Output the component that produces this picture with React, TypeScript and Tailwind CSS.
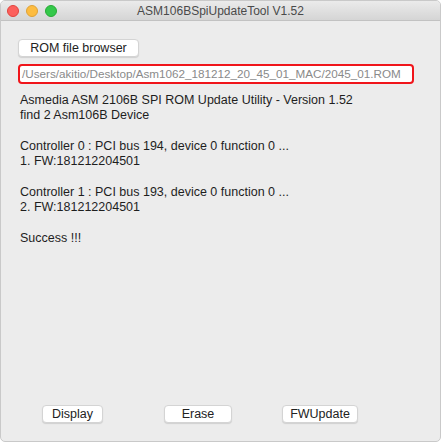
export default function App() {
  const lines = [
    "Asmedia ASM 2106B SPI ROM Update Utility - Version 1.52",
    "find 2 Asm106B Device",
    "",
    "Controller 0 : PCI bus 194, device 0 function 0 ...",
    "1. FW:181212204501",
    "",
    "Controller 1 : PCI bus 193, device 0 function 0 ...",
    "2. FW:181212204501",
    "",
    "Success !!!",
  ];

  const btn =
    "h-[18px] bg-white rounded-[4px] border border-[#d4d4d4] shadow-[0_1px_1px_rgba(0,0,0,0.12)] text-[12.5px] text-[#222] leading-none flex items-center justify-center";

  return (
    <div
      className="w-[442px] h-[442px] bg-white"
      style={{ fontFamily: "'Liberation Sans', Arial, sans-serif" }}
    >
      <div className="w-[441px] h-[442px] flex flex-col bg-[#ececec] border border-[#c9c9c9] rounded-b-[5px] rounded-t-[5px] overflow-hidden">
        {/* Title bar */}
        <div className="relative h-[20px] flex items-center bg-gradient-to-b from-[#ebebeb] to-[#d5d5d5] border-b border-[#c2c2c2]">
          <div className="flex items-center gap-[7px] pl-[6px]">
            <span className="w-[12px] h-[12px] rounded-full bg-[#fc605c] border border-[#e0443e]" />
            <span className="w-[12px] h-[12px] rounded-full bg-[#fdbc40] border border-[#dea236]" />
            <span className="w-[12px] h-[12px] rounded-full bg-[#34c84a] border border-[#27aa35]" />
          </div>
          <div className="absolute inset-0 flex items-center justify-center text-[12px] text-[#4a4a4a]">
            ASM106BSpiUpdateTool V1.52
          </div>
        </div>

        {/* Body */}
        <div className="flex-1 flex flex-col px-[17px]">
          <div className="mt-[18px] w-[121px]">
            <div className={btn}>ROM file browser</div>
          </div>
          <div className="mt-[7px] w-[396px] h-[20px] rounded-[4px] border-2 border-[#f0151b] bg-white flex items-center pl-[2px] text-[11.7px] text-[#8a8a8a] whitespace-nowrap overflow-hidden">
            /Users/akitio/Desktop/Asm1062_181212_20_45_01_MAC/2045_01.ROM
          </div>
          <div className="mt-[9px] pl-[2px] text-[12.5px] leading-[15.3px] text-[#1e1e1e]">
            {lines.map((l, i) => (
              <div key={i} className="h-[15.3px] whitespace-nowrap">
                {l}
              </div>
            ))}
          </div>
          <div className="flex-1" />
          <div className="flex items-center mb-[18px]">
            <div className={`${btn} w-[61px] ml-[24px]`}>Display</div>
            <div className={`${btn} w-[68px] ml-[61px]`}>Erase</div>
            <div className={`${btn} w-[76px] ml-[50px]`}>FWUpdate</div>
          </div>
        </div>
      </div>
    </div>
  );
}
